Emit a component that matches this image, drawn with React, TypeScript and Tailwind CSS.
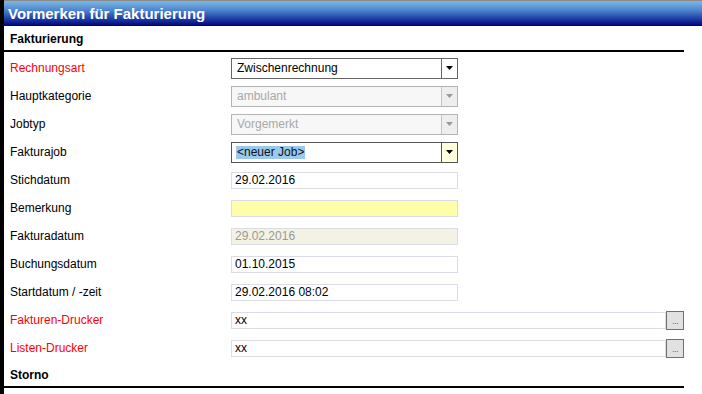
import React from "react";

function Arrow({ color }: { color: string }) {
  return (
    <svg width="7" height="4" viewBox="0 0 7 4">
      <polygon points="0,0 7,0 3.5,4" fill={color} />
    </svg>
  );
}

function Select({
  value,
  variant,
}: {
  value: string;
  variant: "normal" | "disabled" | "focus";
}) {
  if (variant === "disabled") {
    return (
      <div className="w-[227px] h-[21px] flex border border-[#b4b4b4] bg-[#f7f7f7]">
        <div className="flex-1 pl-[5px] flex items-center text-[#a8a8a8] text-[12px]">{value}</div>
        <div className="w-[16px] border-l border-[#c4c4c4] bg-[#eeeeee] flex items-center justify-center">
          <Arrow color="#9a9a9a" />
        </div>
      </div>
    );
  }
  if (variant === "focus") {
    return (
      <div className="w-[227px] h-[21px] flex border border-[#555555] bg-white">
        <div className="flex-1 pl-[4px] flex items-center">
          <span className="bg-[#99c9ef] text-[#111] text-[12px] leading-[13px] px-[1px]">&lt;neuer Job&gt;</span>
        </div>
        <div className="w-[16px] border-l border-[#555555] bg-[#ffffdc] flex items-center justify-center">
          <Arrow color="#000" />
        </div>
      </div>
    );
  }
  return (
    <div className="w-[227px] h-[21px] flex border border-[#666666] bg-white">
      <div className="flex-1 pl-[5px] flex items-center text-black text-[12px]">{value}</div>
      <div className="w-[16px] border-l border-[#666666] bg-white flex items-center justify-center">
        <Arrow color="#000" />
      </div>
    </div>
  );
}

function Input({
  value = "",
  bg = "bg-white",
  text = "text-black",
  width = "w-[227px]",
}: {
  value?: string;
  bg?: string;
  text?: string;
  width?: string;
}) {
  return (
    <div className={`${width} h-[17px] border border-[#dcdce6] ${bg} ${text} pl-[3px] flex items-center text-[12px] leading-[15px]`}>
      {value}
    </div>
  );
}

function PrinterField({ value }: { value: string }) {
  return (
    <div className="flex items-center">
      <Input value={value} width="w-[435px]" />
      <div className="w-[18px] h-[19px] border border-[#707070] bg-[#e1e1e1] flex items-end justify-center pb-[3px]">
        <span className="text-[9px] leading-[9px] text-[#4070a0] tracking-[-0.5px]">...</span>
      </div>
    </div>
  );
}

function Row({
  label,
  red,
  children,
}: {
  label: string;
  red?: boolean;
  children: React.ReactNode;
}) {
  return (
    <div className="h-[28px] flex items-center">
      <div className={`w-[227px] pl-[6px] text-[12px] ${red ? "text-[#ff0000]" : "text-black"}`}>{label}</div>
      {children}
    </div>
  );
}

export default function App() {
  return (
    <div className="w-[702px] h-[394px] bg-white flex overflow-hidden font-['Liberation_Sans',Arial,sans-serif] text-[12px] text-black">
      <div className="w-[4px] bg-black shrink-0" />
      <div className="flex-1 flex flex-col">
        <div className="h-[1px] bg-[#8a8a8a]" />
        <div className="h-[25px] flex items-center pl-[4px] bg-[linear-gradient(to_bottom,#7cb8e4_0%,#5088d0_35%,#2040a8_70%,#00007a_100%)]">
          <span className="text-white font-bold text-[15px] leading-none">Vormerken für Fakturierung</span>
        </div>
        <div className="pr-[18px] flex flex-col">
          <div className="h-[26px] flex items-center pt-[2px] pl-[6px] font-bold text-[12px] border-b-2 border-black">
            Fakturierung
          </div>
          <div className="pt-[2px] flex flex-col">
            <Row label="Rechnungsart" red>
              <Select value="Zwischenrechnung" variant="normal" />
            </Row>
            <Row label="Hauptkategorie">
              <Select value="ambulant" variant="disabled" />
            </Row>
            <Row label="Jobtyp">
              <Select value="Vorgemerkt" variant="disabled" />
            </Row>
            <Row label="Fakturajob">
              <Select value="<neuer Job>" variant="focus" />
            </Row>
            <Row label="Stichdatum">
              <Input value="29.02.2016" />
            </Row>
            <Row label="Bemerkung">
              <Input bg="bg-[#ffffaa]" />
            </Row>
            <Row label="Fakturadatum">
              <Input value="29.02.2016" bg="bg-[#f4f2e4]" text="text-[#999999]" />
            </Row>
            <Row label="Buchungsdatum">
              <Input value="01.10.2015" />
            </Row>
            <Row label="Startdatum / -zeit">
              <Input value="29.02.2016 08:02" />
            </Row>
            <Row label="Fakturen-Drucker" red>
              <PrinterField value="xx" />
            </Row>
            <Row label="Listen-Drucker" red>
              <PrinterField value="xx" />
            </Row>
          </div>
          <div className="h-[26px] flex items-center pt-[2px] pl-[6px] font-bold text-[12px] border-b-2 border-black">
            Storno
          </div>
        </div>
      </div>
    </div>
  );
}
